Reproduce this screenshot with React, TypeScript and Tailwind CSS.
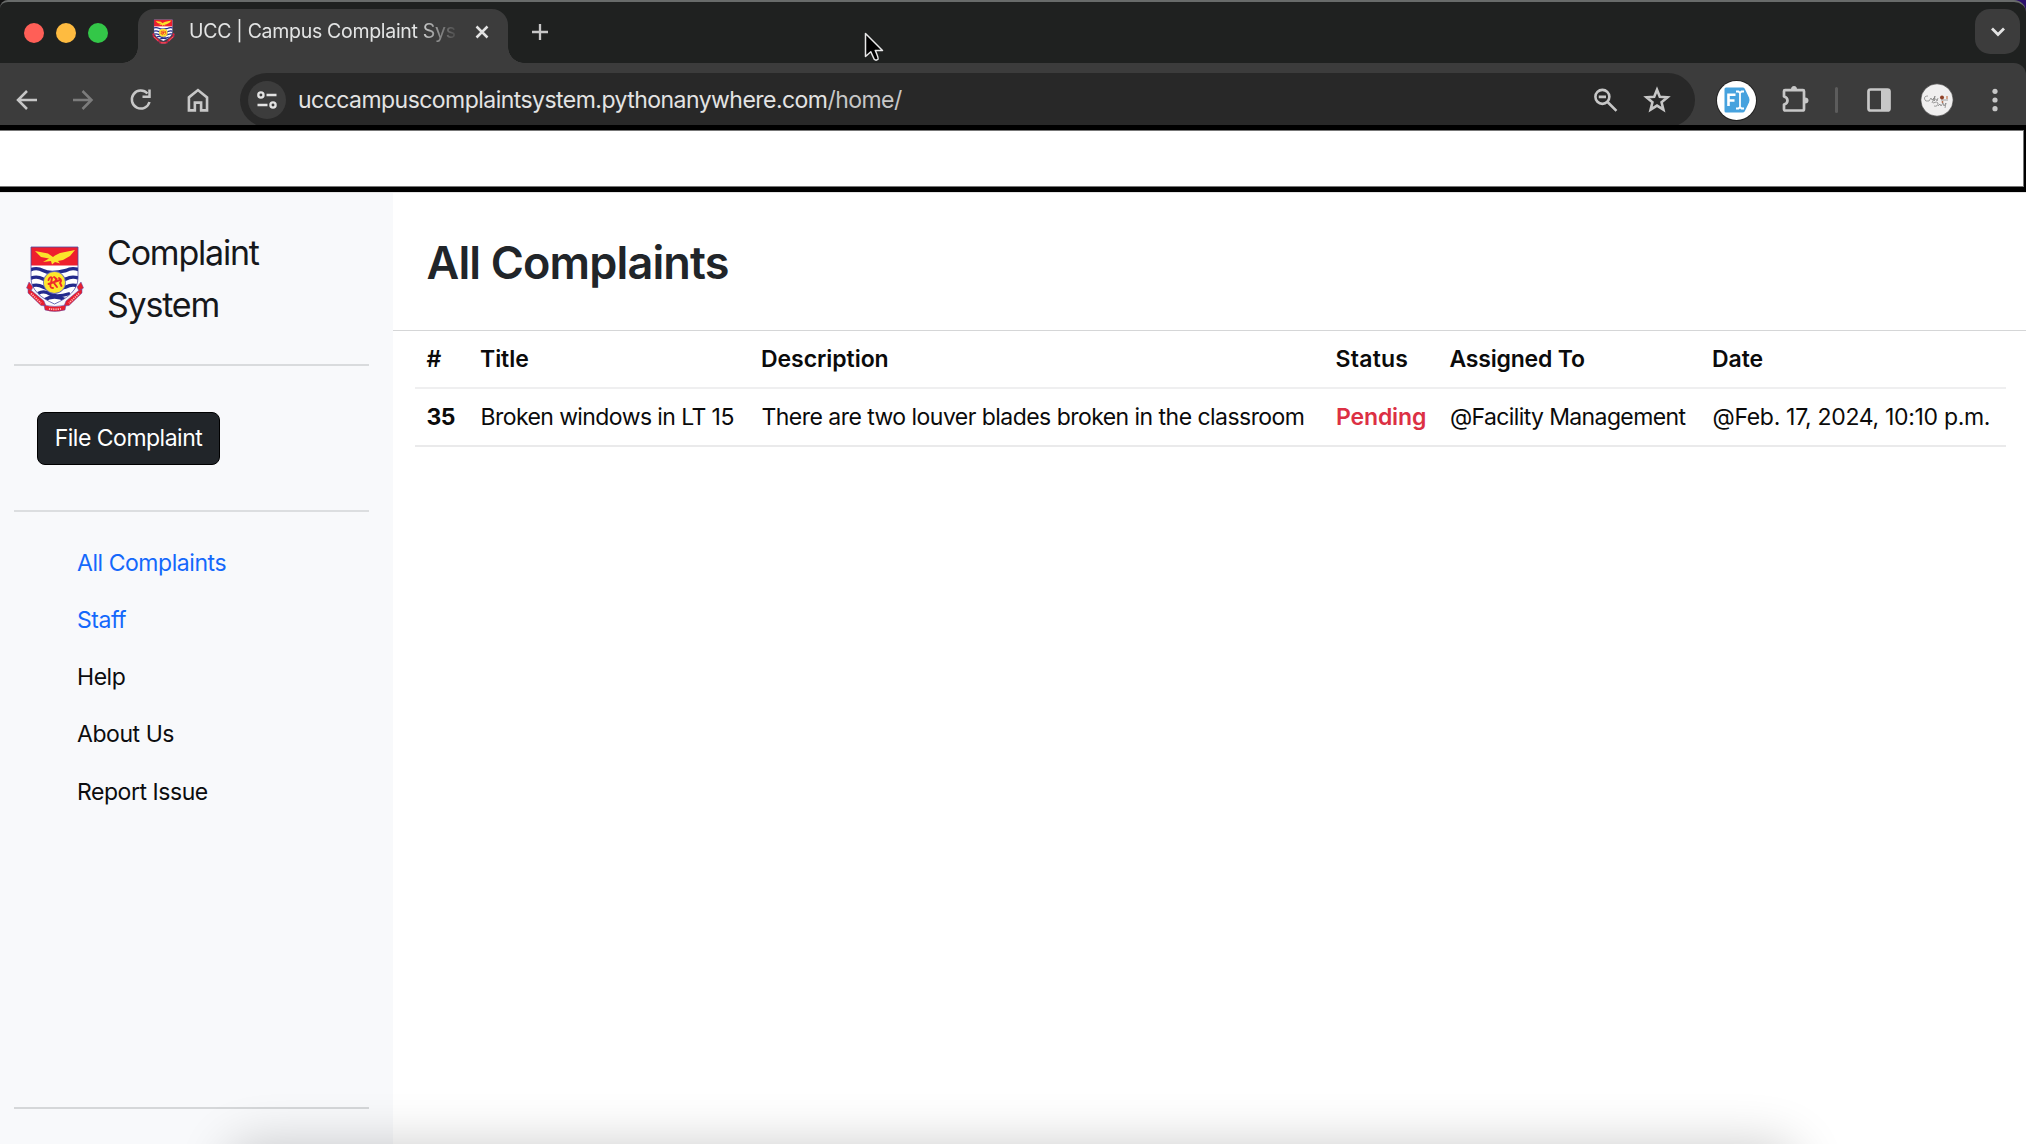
import type { ReactNode } from "react";

function Crest({ className }: { className: string }) {
  return (
    <svg viewBox="0 0 58 66" preserveAspectRatio="none" className={className}>
      <defs>
        <clipPath id="shield">
          <path d="M5 1H52V32C52 44 42 52 28.500 58C15 52 5 44 5 32Z" />
        </clipPath>
      </defs>
      <g fill="#e8202f" stroke="#5a4ab0" strokeWidth="0.5">
        <path d="M3 36L7 41L5 45L0.500 42Z" />
        <path d="M55 36L51 41L53 45L57.500 42Z" />
        <path d="M2 43L6 45L18 55L20 60L15 59.500L2 47Z" />
        <path d="M56 43L52 45L40 55L38 60L43 59.500L56 47Z" />
        <path d="M18 59Q28.500 62 40 59L39 64Q28.500 67 19 64Z" />
      </g>
      <path d="M5 47.500L15 57M53 47.500L43 57M23 62.800Q28.500 63.800 35 62.800" stroke="#ffb0b4" strokeWidth="1.800" strokeDasharray="1.300 0.900" fill="none" />
      <g clipPath="url(#shield)">
        <rect width="58" height="66" fill="#fff" />
        <rect width="58" height="19.500" fill="#ee1f2e" />
        <g fill="none" stroke="#232a8c" strokeWidth="3.400">
          <path d="M2 25Q10 20.500 17 24.500T40 24.500Q47 20.500 56 25" />
          <path d="M2 33.500Q10 29 17 33T40 33Q47 29 56 33.500" />
          <path d="M2 41.500Q10 37 17 41T40 41Q47 37 56 41.500" />
          <path d="M12 47.500Q18 44 24 48T44 47.500" />
          <path d="M18 54Q28 48 40 54" />
        </g>
      </g>
      <path d="M5 1H52V32C52 44 42 52 28.500 58C15 52 5 44 5 32Z" fill="none" stroke="#4a4aa5" strokeWidth="0.800" />
      <path d="M9 5L22 7.500L27 11L29 9.500L34 7L49 4L44 10L37 14L32 15L34 17.500L29 16L26 18.500L25 15L17 16L23 12.500L15 11Z" fill="#fbe42b" />
      <circle cx="28.500" cy="36.500" r="11.400" fill="#6a6ab8" />
      <circle cx="28.500" cy="36.500" r="10.600" fill="#fde72c" />
      <path d="M22.500 34Q24 30 26 32L25 37Q23 42 27 42M28 31L30.500 33L28 37L31 41M33 32Q36.500 34 34 37L35.500 40M22.500 38L34 34" fill="none" stroke="#ee2a2a" strokeWidth="1.900" strokeLinecap="round" />
    </svg>
  );
}

function Glyph({ size = "size-6", children }: { size?: string; children: ReactNode }) {
  return (
    <svg viewBox="0 0 24 24" className={`${size} shrink-0`} fill="none" stroke="#c7c7c7" strokeWidth="2.5">
      {children}
    </svg>
  );
}

function TabStrip() {
  return (
    <div className="flex h-[63px] items-end rounded-tl-lg rounded-tr-[12px] border-t-2 border-[#686b6a] bg-[#1f2120]">
      <div className="mb-[20.5px] ml-6 flex gap-3">
        <div className="size-5 rounded-full bg-[#ff5f57]" />
        <div className="size-5 rounded-full bg-[#febb40]" />
        <div className="size-5 rounded-full bg-[#33c748]" />
      </div>
      <div className="ml-[13.5px] size-4 bg-[radial-gradient(circle_at_0_0,transparent_15.500px,#3c3c3c_16px)]" />
      <div className="flex h-[54px] w-[370px] items-center rounded-t-[16px] bg-[#3c3c3c] pb-[9px]">
        <Crest className="ml-[14px] h-[25px] w-[23px]" />
        <div className="ml-[14.5px] w-[268px] overflow-hidden pt-px text-[19.5px] tracking-[-0.3px] whitespace-nowrap text-[#e3e4e4] [mask-image:linear-gradient(to_right,black_85%,transparent_101%)]">
          UCC | Campus Complaint Sys
        </div>
        <svg viewBox="0 0 14 14" className="ml-[17.5px] size-3.5" stroke="#e3e3e3" strokeWidth="2.500">
          <path d="M1.500 1.500L12.500 12.500M12.500 1.500L1.500 12.500" />
        </svg>
      </div>
      <div className="size-4 bg-[radial-gradient(circle_at_100%_0,transparent_15.500px,#3c3c3c_16px)]" />
      <svg viewBox="0 0 18 18" className="mb-[22px] ml-[7px] size-[18px]" stroke="#c7c7c7" strokeWidth="2.3">
        <path d="M9 1V17M1 9H17" />
      </svg>
      <div className="mr-1.5 mb-[9px] ml-auto flex size-[45px] items-center justify-center rounded-[15px] bg-[#3c3c3c]">
        <svg viewBox="0 0 14 10" className="h-[10px] w-[14px]" fill="none" stroke="#e3e3e3" strokeWidth="2.8">
          <path d="M1 1.500L7 7.500L13 1.500" />
        </svg>
      </div>
    </div>
  );
}

function Toolbar() {
  return (
    <div className="bg-[#1f2120]">
      <div className="flex h-[62px] items-start overflow-hidden rounded-tr-[12px] bg-[#3c3c3c]">
        <div className="flex h-[74px] w-[240px] shrink-0 items-center gap-[33.3px] pl-[14px]">
          <Glyph>
            <path d="M23 12H4.500M13 3L4 12L13 21" />
          </Glyph>
          <Glyph>
            <path d="M2 12H20M11.500 3L20.500 12L11.500 21" stroke="#7c7c7c" />
          </Glyph>
          <Glyph>
            <path d="M18.500 5.500A9 9 0 1 0 20.500 14" />
            <path d="M20.500 1.500V8.800H13.500" />
          </Glyph>
          <Glyph size="size-[25px]">
            <path d="M2.800 9L11.500 2L20.200 9V21.500H14.500V14H8.500V21.500H2.800Z" />
          </Glyph>
        </div>
        <div className="mt-[10px] flex h-[54px] w-[1455px] shrink-0 items-center rounded-full bg-[#282828] pl-[7.500px]">
          <div className="flex size-[38px] items-center justify-center rounded-full bg-[#3c3c3c]">
            <svg viewBox="0 0 20 18" className="h-[18px] w-5" fill="none" stroke="#e3e3e3" strokeWidth="2.3">
              <circle cx="3.900" cy="4" r="2.600" />
              <path d="M9.500 4H19.500M0.500 14H10.500" />
              <circle cx="16" cy="14" r="2.600" />
            </svg>
          </div>
          <div className="ml-[12.5px] pt-px text-[23px] tracking-[-0.54px] whitespace-nowrap text-[#e3e3e3]">
            ucccampuscomplaintsystem.pythonanywhere.com<span className="text-[#c7c7c7]">/home/</span>
          </div>
          <div className="mr-[24px] ml-auto flex items-center gap-[25px]">
            <Glyph size="size-[25px]">
              <circle cx="9" cy="8.500" r="6.700" />
              <path d="M13.500 13L22.500 22M5.500 8.500H12.500" />
            </Glyph>
            <Glyph size="size-[28px]">
              <path strokeWidth="2.2" d="M12 3.200L14.400 9.200L21 9.700L15.900 13.900L17.500 20.300L12 16.800L6.500 20.300L8.100 13.900L3 9.700L9.600 9.200Z" />
            </Glyph>
          </div>
        </div>
        <div className="flex h-[74px] items-center pl-[22px]">
          <div className="flex size-[39px] items-center justify-center rounded-full bg-white shadow-[0_0_0_1px_#222]">
            <svg viewBox="0 0 26 26" className="size-[26px]">
              <path d="M2 0.500H18.500Q20 0.500 20.800 1.800L25 10.500Q26 13 25 15.500L20.800 24.200Q20 25.500 18.500 25.500H2Q0.500 25.500 0.500 24V2Q0.500 0.500 2 0.500Z" fill="#46a2de" />
              <path d="M4.500 19V7.800H11.500M4.500 13.500H10.500" fill="none" stroke="#fff" strokeWidth="2.600" />
              <path d="M12 4.500H14.500L16 6L17.500 4.500H20M12 21.500H14.500L16 20L17.500 21.500H20M16 5V21" fill="none" stroke="#fff" strokeWidth="1.800" />
            </svg>
          </div>
          <svg viewBox="0 0 27 27" className="mb-[3px] ml-[25.500px] size-[27px]" fill="none" stroke="#c7c7c7" strokeWidth="2.700" strokeLinejoin="round">
            <path d="M3 5.200H21Q22 5.200 22 6.200V24Q22 25.500 20.500 25.500H3.200Q2 25.500 2 24V19.500Q5.500 18.500 5.500 15.500T2 11.500V6.200Q2 5.200 3 5.200Z" />
            <path d="M9 4.500Q9 1 12 1T15 4.500ZM23 12.500Q26.500 12.500 26.500 15.500T23 18.500Z" fill="#c7c7c7" stroke="none" />
          </svg>
          <div className="ml-[26px] h-[26px] w-[3px] rounded-full bg-[#5c5c5c]" />
          <svg viewBox="0 0 24 24" className="ml-[29.500px] size-6">
            <rect x="1.500" y="1.500" width="21" height="21" rx="2" fill="none" stroke="#c7c7c7" strokeWidth="2.700" />
            <path d="M14 1H21Q23 1 23 3V21Q23 23 21 23H14Z" fill="#c7c7c7" />
          </svg>
          <svg viewBox="0 0 34 34" className="ml-[29px] size-[34px]" fill="none">
            <circle cx="17" cy="17" r="16.200" fill="#f0efef" stroke="#262626" strokeWidth="0.600" />
            <g stroke="#666" strokeWidth="0.600">
              <path d="M8 13Q4 13 4.500 16T9 18L11 15L12 17L14 15M12 20L15 13L14 18Q16 14 17 18L18 15" />
              <path d="M14 23Q18 24 18 20Q17 18 13 20M18 23L20 21L21 23L23 20L24 23L26 20L25 25M21 17H28" />
            </g>
            <circle cx="22" cy="14.500" r="2" fill="#8f4126" />
            <circle cx="22.500" cy="19" r="0.900" fill="#b06545" />
            <path d="M27 16V13" stroke="#c2764e" strokeWidth="1.200" />
          </svg>
          <svg viewBox="0 0 6 24" className="ml-[37.5px] h-6 w-1.5" fill="#c7c7c7">
            <circle cx="3" cy="3.300" r="2.600" />
            <circle cx="3" cy="12" r="2.600" />
            <circle cx="3" cy="20.700" r="2.600" />
          </svg>
        </div>
      </div>
    </div>
  );
}

const links = [
  { label: "All Complaints", active: true },
  { label: "Staff", active: true },
  { label: "Help", active: false },
  { label: "About Us", active: false },
  { label: "Report Issue", active: false },
];

function Sidebar() {
  return (
    <aside className="flex w-[393px] shrink-0 flex-col bg-[#f8f9fb] pr-[24px] pl-[14px]">
      <div className="flex h-[173px] items-start border-b-2 border-[#d9dbdd] pt-[34px]">
        <Crest className="mt-[19px] ml-[12px] h-[66px] w-[58px]" />
        <div className="ml-[23px] w-[180px] text-[34px] leading-[51.5px] tracking-[-1.2px] text-[#16181b]">
          Complaint System
        </div>
      </div>
      <div className="h-[146px] border-b-2 border-[#dcdee0] pt-[46px] pl-[23px]">
        <button className="flex h-[53px] w-[183px] items-center justify-center rounded-[8px] border border-black bg-[#212529] text-[23px] tracking-[-0.5px] text-white">
          File Complaint
        </button>
      </div>
      <nav className="flex flex-col pt-[22.5px] pl-[63px] text-[23px] leading-[57.3px] tracking-[-0.45px]">
        {links.map((l) => (
          <a key={l.label} className={l.active ? "text-[#1468fb]" : "text-[#0c0d0f]"}>
            {l.label}
          </a>
        ))}
      </nav>
      <div className="mt-auto mb-[35px] h-0.5 bg-[#d5d7d9]" />
    </aside>
  );
}

function Complaints() {
  return (
    <main className="flex-1 overflow-hidden text-[23px] whitespace-nowrap text-[#0b0b0b]">
      <h1 className="h-[138px] border-b border-[#d5d6d7] pt-[37px] pl-[33.5px] text-[45px] leading-[66px] font-semibold tracking-[-0.85px] text-[#212529]">
        All Complaints
      </h1>
      <table className="-mt-px ml-[22px] w-[1591px] table-fixed border-collapse text-left leading-[34px] tracking-[-0.5px] [&_td]:pl-[12px] [&_th]:pl-[11.500px]">
        <colgroup>
          <col className="w-[53.5px]" />
          <col className="w-[281px]" />
          <col className="w-[574.5px]" />
          <col className="w-[114px]" />
          <col className="w-[262.5px]" />
          <col />
        </colgroup>
        <thead>
          <tr className="h-[58px] border-b-2 border-[#efeff0] tracking-[-0.05px] [&_th]:font-semibold">
            <th>#</th>
            <th>Title</th>
            <th>Description</th>
            <th className="tracking-[0.25px]">Status</th>
            <th className="tracking-[-0.2px]">Assigned To</th>
            <th>Date</th>
          </tr>
        </thead>
        <tbody>
          <tr className="h-[58px] border-b-2 border-[#eaeaeb]">
            <th className="font-bold">35</th>
            <td className="tracking-[-0.58px]">Broken windows in LT 15</td>
            <td className="tracking-[-0.54px]">There are two louver blades broken in the classroom</td>
            <td className="font-semibold tracking-[-0.15px] text-[#dc3044]">Pending</td>
            <td className="tracking-[-0.62px]">@Facility Management</td>
            <td className="tracking-[-0.31px]">@Feb. 17, 2024, 10:10 p.m.</td>
          </tr>
        </tbody>
      </table>
    </main>
  );
}

export default function App() {
  return (
    <div className="relative flex h-[1144px] w-[2026px] flex-col overflow-hidden bg-white font-['Inter',sans-serif]">
      <div className="bg-[linear-gradient(to_right,#111_50%,#2b0f6b_50%)]">
        <TabStrip />
      </div>
      <Toolbar />
      <div className="h-[67px] border-y-[5px] border-r-2 border-black bg-white">
        <div className="h-full border-y border-r border-[#777]" />
      </div>
      <div className="h-px shrink-0 bg-[#e4e4e4]" />
      <div className="flex min-h-0 flex-1">
        <Sidebar />
        <Complaints />
      </div>
      <svg viewBox="0 0 20 30" className="absolute top-[32px] left-[864px] h-[30px] w-5">
        <path d="M1.500 1.500V24.500L6.800 19.800L10.200 27.200Q12 29 14 27.200Q14.600 26 11.300 18.500H18.500Z" fill="#000" stroke="#e8e8e8" strokeWidth="1.500" strokeLinejoin="round" />
      </svg>
      <div className="pointer-events-none absolute top-full left-[228px] h-40 w-[1568px] rounded-[24px] shadow-[0_0_52px_rgba(0,0,0,0.2)]" />
    </div>
  );
}
